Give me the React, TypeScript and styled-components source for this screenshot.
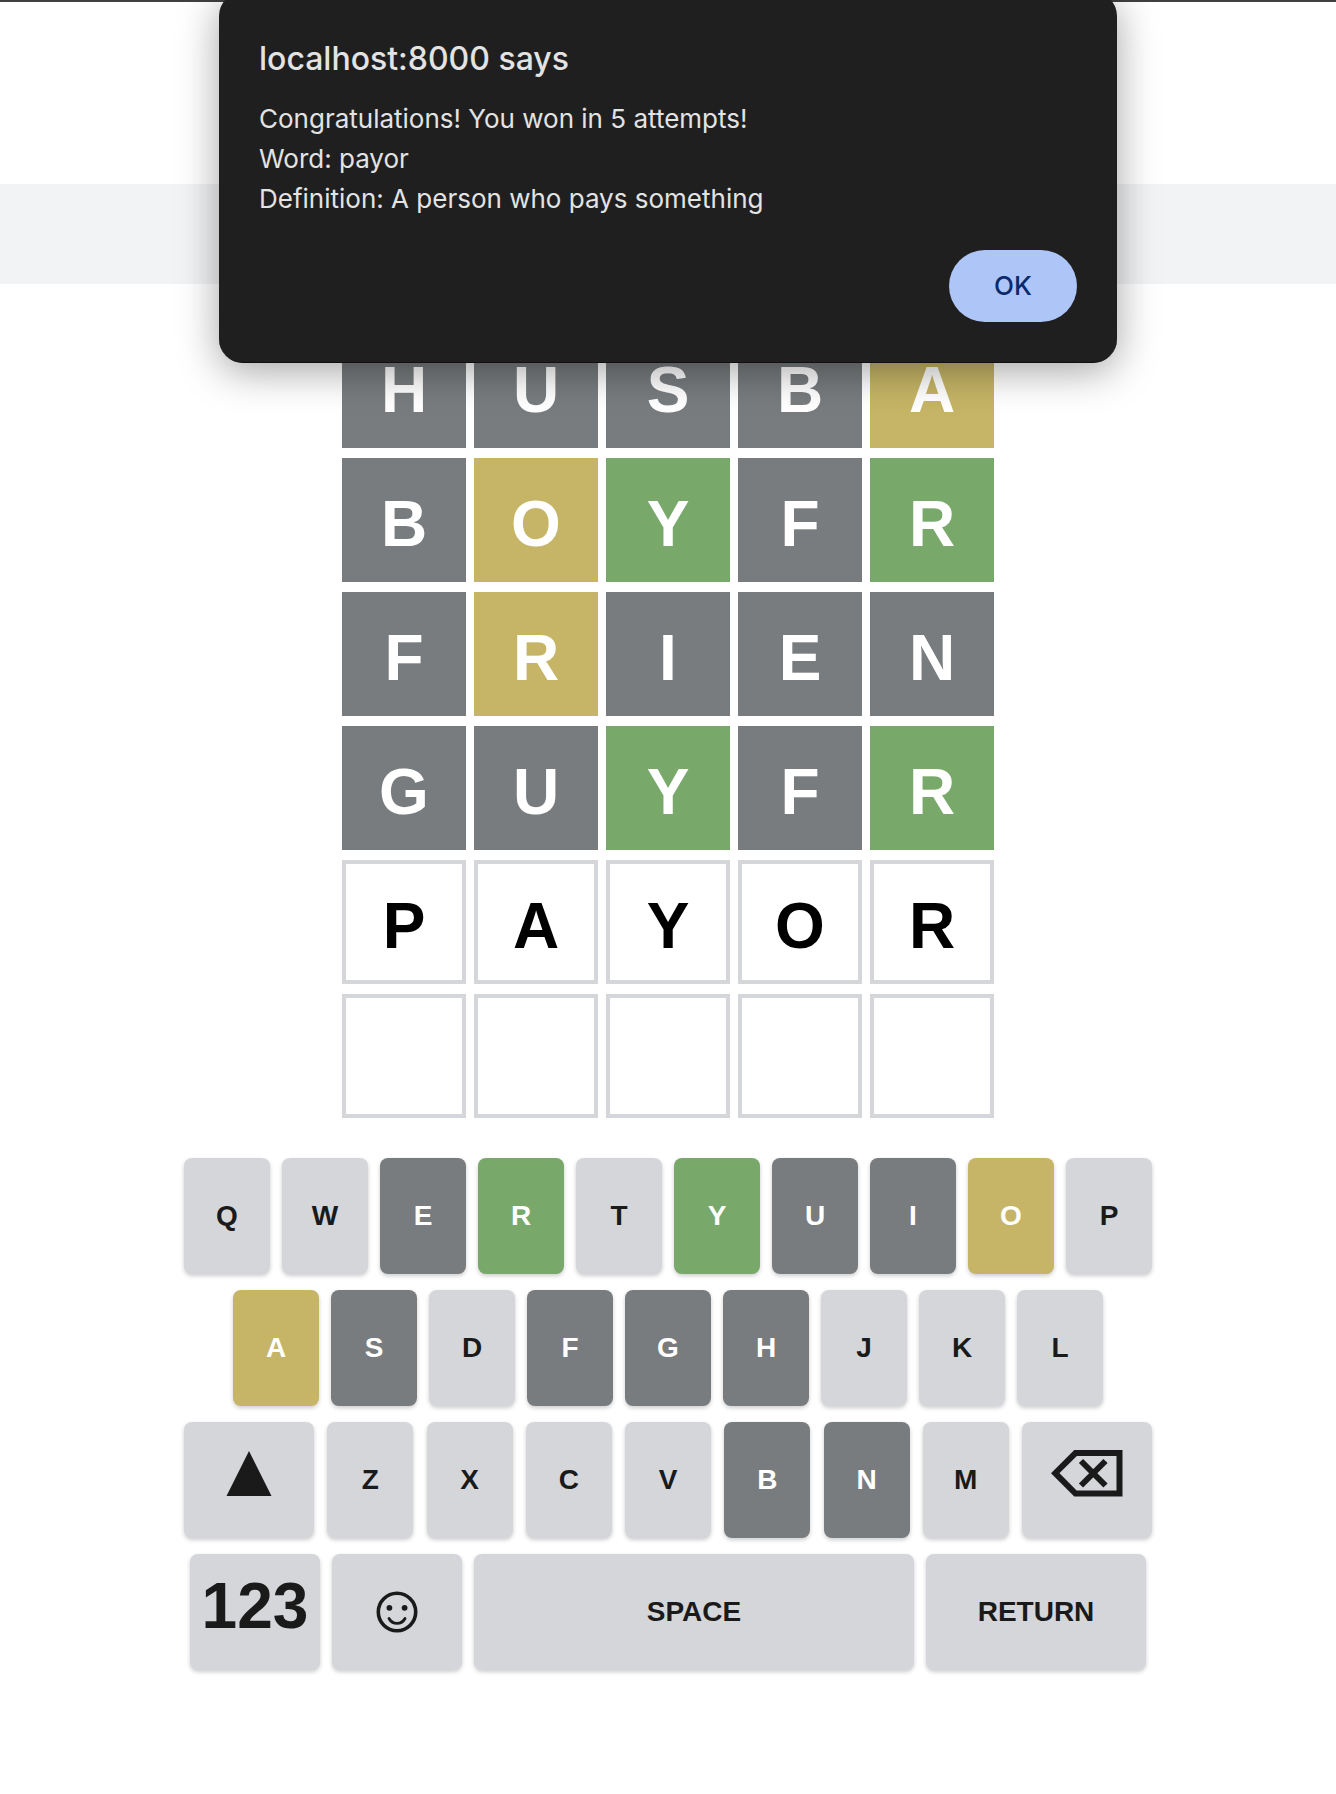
import React from "react";
import styled, { createGlobalStyle, css } from "styled-components";

type Mark = "absent" | "present" | "correct";

const palette = {
  absent: "#787c7e",
  present: "#c6b566",
  correct: "#79a86b",
  idle: "#d4d6da",
  ink: "#1a1a1a",
};

const GlobalStyle = createGlobalStyle`
  *, *::before, *::after { box-sizing: border-box; }
  body {
    margin: 0;
    background: #fff;
    font-family: "Liberation Sans", Arial, sans-serif;
  }
`;

const Page = styled.div`
  position: relative;
  min-height: 100vh;
  overflow: hidden;
`;

const Header = styled.header`
  height: 184px;
  border-top: 2px solid #423f40;
`;

const Banner = styled.div`
  height: 100px;
  background: #f2f3f5;
`;

const Game = styled.main`
  display: flex;
  flex-direction: column;
  align-items: center;
  gap: 40px;
  padding: 40px 0;
`;

const Board = styled.div`
  display: grid;
  grid-template-columns: repeat(5, 124px);
  gap: 10px 8px;
`;

const Tile = styled.div<{ $mark?: Mark }>`
  display: flex;
  align-items: center;
  justify-content: center;
  height: 124px;
  padding-top: 8px;
  border: 4px solid ${(p) => (p.$mark ? palette[p.$mark] : palette.idle)};
  background: ${(p) => (p.$mark ? palette[p.$mark] : "#fff")};
  color: ${(p) => (p.$mark ? "#fff" : "#000")};
  font-size: 64px;
  font-weight: 700;
  line-height: 1;
`;

const Keyboard = styled.div`
  display: flex;
  flex-direction: column;
  gap: 16px;
  width: 968px;
  max-width: 100%;
`;

const KeyRow = styled.div<{ $spread?: boolean }>`
  display: flex;
  justify-content: ${(p) => (p.$spread ? "space-between" : "center")};
  gap: 12px;
`;

const keyWidths = { letter: 86, wide: 130, enter: 220, space: 440 };

const Key = styled.button<{
  $mark?: Mark;
  $size?: keyof typeof keyWidths;
  $raised?: boolean;
  $large?: boolean;
}>`
  display: flex;
  align-items: center;
  justify-content: center;
  width: ${(p) => keyWidths[p.$size ?? "letter"]}px;
  height: 116px;
  padding: 0;
  border: 0;
  border-radius: 8px;
  background: ${(p) => palette[p.$mark ?? "idle"]};
  color: ${(p) => (p.$mark ? "#fff" : palette.ink)};
  box-shadow: 0 2px 4px rgba(0, 0, 0, 0.2);
  font: 700 ${(p) => (p.$large ? 64 : 28)}px / 1 "Liberation Sans", Arial, sans-serif;
  cursor: pointer;
  ${(p) =>
    p.$raised &&
    css`
      padding-bottom: 12px;
    `}
`;

const DialogLayer = styled.div`
  position: absolute;
  top: -8px;
  left: 0;
  right: 0;
  display: flex;
  justify-content: center;
`;

const Dialog = styled.section`
  display: flex;
  flex-direction: column;
  width: 898px;
  max-width: 100%;
  padding: 47px 40px 40px;
  border-bottom: 1px solid #101010;
  border-radius: 24px;
  background: #1f1f1f;
  color: #e3e3e3;
  box-shadow: 0 8px 40px rgba(0, 0, 0, 0.36);
  font-family: Inter, Roboto, sans-serif;
`;

const DialogTitle = styled.h1`
  margin: 0 0 20px;
  font-size: 32px;
  font-weight: 500;
  line-height: 40px;
`;

const DialogText = styled.p`
  margin: 0;
  font-size: 26px;
  line-height: 40px;
  white-space: pre-line;
`;

const OkButton = styled.button`
  align-self: flex-end;
  width: 128px;
  height: 72px;
  margin-top: 31px;
  border: 0;
  border-radius: 36px;
  background: #adc6f7;
  color: #0b2a6b;
  font: 500 26px / 1 Inter, Roboto, sans-serif;
  cursor: pointer;
`;

const guesses: { word: string; marks?: Mark[] }[] = [
  { word: "HUSBA", marks: ["absent", "absent", "absent", "absent", "present"] },
  { word: "BOYFR", marks: ["absent", "present", "correct", "absent", "correct"] },
  { word: "FRIEN", marks: ["absent", "present", "absent", "absent", "absent"] },
  { word: "GUYFR", marks: ["absent", "absent", "correct", "absent", "correct"] },
  { word: "PAYOR" },
  { word: "     " },
];

const keyMarks: Record<string, Mark> = {
  E: "absent", R: "correct", Y: "correct", U: "absent", I: "absent", O: "present",
  A: "present", S: "absent", F: "absent", G: "absent", H: "absent",
  B: "absent", N: "absent",
};

const LetterKeys = ({ letters }: { letters: string }) => (
  <>
    {letters.split("").map((letter) => (
      <Key key={letter} type="button" $mark={keyMarks[letter]}>
        {letter}
      </Key>
    ))}
  </>
);

const ShiftIcon = () => (
  <svg width="46" height="46" viewBox="0 0 46 46" aria-hidden="true">
    <path d="M23 0 L45.5 45 H0.5 Z" fill="currentColor" />
  </svg>
);

const BackspaceIcon = () => (
  <svg width="72" height="48" viewBox="0 0 72 48" fill="none" stroke="currentColor" strokeWidth="6" aria-hidden="true">
    <path d="M24.5 3 H68.5 V43.5 H24.5 L4.2 23.2 Z" />
    <path d="M30 11 L54.5 35.5 M54.5 11 L30 35.5" />
  </svg>
);

const SmileIcon = () => (
  <svg width="42" height="42" viewBox="0 0 42 42" fill="none" stroke="currentColor" strokeWidth="3.6" aria-hidden="true">
    <circle cx="21" cy="21" r="18.7" />
    <circle cx="13.4" cy="16.8" r="2.9" fill="currentColor" stroke="none" />
    <circle cx="28.6" cy="16.8" r="2.9" fill="currentColor" stroke="none" />
    <path d="M13 27.5 C16.5 34 25.5 34 29 27.5" strokeWidth="2.8" strokeLinecap="round" />
  </svg>
);

export default function App() {
  const [open, setOpen] = React.useState(true);
  return (
    <Page>
      <GlobalStyle />
      <Header />
      <Banner />
      <Game>
        <Board>
          {guesses.map(({ word, marks }, row) =>
            word.split("").map((letter, col) => (
              <Tile key={`${row}-${col}`} $mark={marks?.[col]}>
                {letter.trim()}
              </Tile>
            ))
          )}
        </Board>
        <Keyboard>
          <KeyRow>
            <LetterKeys letters="QWERTYUIOP" />
          </KeyRow>
          <KeyRow>
            <LetterKeys letters="ASDFGHJKL" />
          </KeyRow>
          <KeyRow $spread>
            <Key type="button" $size="wide" $raised aria-label="Shift">
              <ShiftIcon />
            </Key>
            <LetterKeys letters="ZXCVBNM" />
            <Key type="button" $size="wide" $raised aria-label="Backspace">
              <BackspaceIcon />
            </Key>
          </KeyRow>
          <KeyRow>
            <Key type="button" $size="wide" $raised $large>
              123
            </Key>
            <Key type="button" $size="wide" aria-label="Emoji">
              <SmileIcon />
            </Key>
            <Key type="button" $size="space">
              SPACE
            </Key>
            <Key type="button" $size="enter">
              RETURN
            </Key>
          </KeyRow>
        </Keyboard>
      </Game>
      {open && (
        <DialogLayer>
          <Dialog role="alertdialog" aria-labelledby="alert-title" aria-describedby="alert-text">
            <DialogTitle id="alert-title">localhost:8000 says</DialogTitle>
            <DialogText id="alert-text">
              {"Congratulations! You won in 5 attempts!\nWord: payor\nDefinition: A person who pays something"}
            </DialogText>
            <OkButton type="button" onClick={() => setOpen(false)}>
              OK
            </OkButton>
          </Dialog>
        </DialogLayer>
      )}
    </Page>
  );
}
